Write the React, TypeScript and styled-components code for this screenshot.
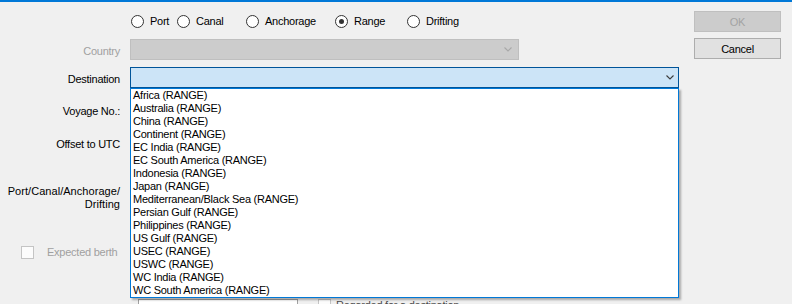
import React from 'react'
import styled, { createGlobalStyle } from 'styled-components'

const GlobalStyle = createGlobalStyle`
  html, body {
    margin: 0;
    padding: 0;
    background: #f0f0f0;
  }

  body {
    font-family: "Liberation Sans", Arial, sans-serif;
    font-size: 11px;
    letter-spacing: -0.25px;
    color: #000;
  }
`

const modes = [
  { label: 'Port', width: 46 },
  { label: 'Canal', width: 69 },
  { label: 'Anchorage', width: 89 },
  { label: 'Range', width: 72, checked: true },
  { label: 'Drifting', width: 70 },
]

const destinations = [
  'Africa (RANGE)',
  'Australia (RANGE)',
  'China (RANGE)',
  'Continent (RANGE)',
  'EC India (RANGE)',
  'EC South America (RANGE)',
  'Indonesia (RANGE)',
  'Japan (RANGE)',
  'Mediterranean/Black Sea (RANGE)',
  'Persian Gulf (RANGE)',
  'Philippines (RANGE)',
  'US Gulf (RANGE)',
  'USEC (RANGE)',
  'USWC (RANGE)',
  'WC India (RANGE)',
  'WC South America (RANGE)',
]

const Chevron = ({ color }: { color: string }) => (
  <svg width="8" height="5" viewBox="0 0 8 5">
    <polyline points="0.5,0.5 4,4 7.5,0.5" fill="none" stroke={color} strokeWidth="1.1" />
  </svg>
)

const App = () => {
  return (
    <>
      <GlobalStyle />
      <Window>
        <Form>
          <Row $top={13}>
            <span />
            <RadioGroup>
              {modes.map((mode) => (
                <RadioItem key={mode.label} $width={mode.width}>
                  <RadioCircle>{mode.checked && <RadioDot />}</RadioCircle>
                  <span>{mode.label}</span>
                </RadioItem>
              ))}
            </RadioGroup>
          </Row>

          <Row $top={11}>
            <Label $disabled>Country</Label>
            <ComboBox $width={389} $variant="disabled">
              <Chevron color="#a8a8a8" />
            </ComboBox>
          </Row>

          <Row $top={7}>
            <Label>Destination</Label>
            <ComboBox $width={549} $variant="active">
              <Chevron color="#3c3c3c" />
              <DropList>
                {destinations.map((item) => (
                  <ListItem key={item}>{item}</ListItem>
                ))}
              </DropList>
            </ComboBox>
          </Row>

          <Row $top={11}>
            <Label>Voyage No.:</Label>
            <TextBox $width={150} />
          </Row>

          <Row $top={12}>
            <Label>Offset to UTC</Label>
            <TextBox $width={80} />
          </Row>

          <Row $top={26}>
            <Label $wide>
              Port/Canal/Anchorage/
              <br />
              Drifting
            </Label>
            <TextBox $width={300} />
          </Row>

          <CheckRow $top={35}>
            <CheckBox />
            <CheckText $disabled>Expected berth</CheckText>
          </CheckRow>

          <Row $top={40}>
            <span />
            <SubFields>
              <LocationBox>
                <Hint>Select port or range</Hint>
                <ClearMark />
              </LocationBox>
              <CheckBox />
              <CheckText>Regarded for a destination</CheckText>
            </SubFields>
          </Row>
        </Form>

        <ButtonColumn>
          <Button disabled>OK</Button>
          <Button>Cancel</Button>
        </ButtonColumn>
      </Window>
    </>
  )
}

const Window = styled.div`
  position: relative;
  width: 792px;
  height: 304px;
  box-sizing: border-box;
  overflow: hidden;
  border-top: 2px solid #0078d7;
  display: grid;
  grid-template-columns: 690px 1fr;
`

const Form = styled.div`
  display: flex;
  flex-direction: column;
`

const Row = styled.div<{ $top: number }>`
  display: grid;
  grid-template-columns: 120px 1fr;
  column-gap: 10px;
  align-items: start;
  margin-top: ${({ $top }) => $top}px;
`

const Label = styled.div<{ $disabled?: boolean; $wide?: boolean }>`
  padding-top: 6px;
  text-align: right;
  line-height: 13px;
  white-space: nowrap;
  letter-spacing: ${({ $wide }) => ($wide ? '0.05px' : 'inherit')};
  color: ${({ $disabled }) => ($disabled ? '#a0a0a0' : '#000')};
`

const RadioGroup = styled.div`
  display: flex;
  align-items: center;
  height: 13px;
  padding-left: 1px;
`

const RadioItem = styled.label<{ $width: number }>`
  display: flex;
  align-items: center;
  gap: 6px;
  width: ${({ $width }) => $width}px;
  line-height: 13px;
  white-space: nowrap;
`

const RadioCircle = styled.span`
  display: flex;
  align-items: center;
  justify-content: center;
  flex: none;
  width: 13px;
  height: 13px;
  box-sizing: border-box;
  border: 1px solid #333;
  border-radius: 50%;
  background: #fff;
`

const RadioDot = styled.span`
  width: 5px;
  height: 5px;
  border-radius: 50%;
  background: #333;
`

const ComboBox = styled.div<{ $width: number; $variant: 'disabled' | 'active' }>`
  position: relative;
  display: flex;
  align-items: center;
  justify-content: flex-end;
  width: ${({ $width }) => $width}px;
  height: 21px;
  box-sizing: border-box;
  padding-right: ${({ $variant }) => ($variant === 'active' ? 4 : 6)}px;
  border: 1px solid ${({ $variant }) => ($variant === 'active' ? '#005499' : '#bfbfbf')};
  background: ${({ $variant }) => ($variant === 'active' ? '#cce4f7' : '#cccccc')};
`

const DropList = styled.ul`
  position: absolute;
  top: calc(100% + 1px);
  left: -1px;
  z-index: 2;
  width: 549px;
  box-sizing: border-box;
  margin: 0;
  padding: 0;
  list-style: none;
  border: 1px solid #0078d7;
  background: #fff;
  box-shadow: 2px 2px 2px rgba(0, 0, 0, 0.3);
`

const ListItem = styled.li`
  height: 13px;
  padding-left: 2px;
  line-height: 13px;
  white-space: nowrap;
`

const TextBox = styled.div<{ $width: number }>`
  width: ${({ $width }) => $width}px;
  height: 21px;
  box-sizing: border-box;
  border: 1px solid #7a7a7a;
  background: #fff;
`

const CheckRow = styled.div<{ $top: number }>`
  display: flex;
  align-items: center;
  gap: 13px;
  height: 13px;
  margin-top: ${({ $top }) => $top}px;
  padding-left: 21px;
`

const CheckBox = styled.span`
  flex: none;
  width: 13px;
  height: 13px;
  box-sizing: border-box;
  border: 1px solid #c4c4c4;
  background: #fcfcfc;
`

const CheckText = styled.span<{ $disabled?: boolean }>`
  line-height: 13px;
  white-space: nowrap;
  color: ${({ $disabled }) => ($disabled ? '#a0a0a0' : '#4a4a4a')};
`

const SubFields = styled.div`
  display: flex;
  align-items: flex-start;
  gap: 5px;
  padding-left: 8px;

  > span:nth-child(2) {
    margin-left: 15px;
  }
`

const LocationBox = styled.div`
  display: flex;
  align-items: center;
  justify-content: space-between;
  width: 160px;
  height: 21px;
  box-sizing: border-box;
  padding: 0 19px 0 46px;
  border: 1px solid #a0a0a0;
  background: #fff;
`

const Hint = styled.span`
  color: #8c8c8c;
  white-space: nowrap;
`

const ClearMark = styled.span`
  width: 9px;
  height: 9px;
  background: #555;
`

const ButtonColumn = styled.div`
  display: flex;
  flex-direction: column;
  gap: 6px;
  padding: 9px 0 0 4px;
`

const Button = styled.button`
  width: 87px;
  height: 21px;
  box-sizing: border-box;
  padding: 0;
  font: inherit;
  letter-spacing: inherit;
  color: #000;
  border: 1px solid #adadad;
  background: #e1e1e1;

  &:disabled {
    color: #a3a3a3;
    border-color: #bfbfbf;
    background: #cccccc;
  }
`

export default App
